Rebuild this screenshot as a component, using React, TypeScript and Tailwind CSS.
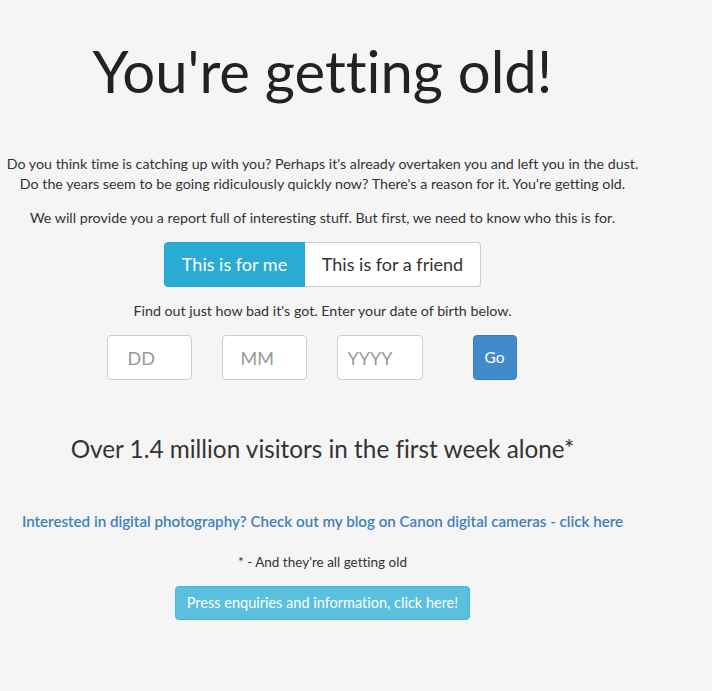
import React from "react";

export default function App() {
  return (
    <div className="min-h-[691px] bg-[#f5f5f5] text-[#333] font-['Lato',sans-serif] [font-variant-ligatures:none]">
      <div className="w-[645px] flex flex-col items-center text-center">
        <h1 className="mt-[33px] text-[58px] leading-[76px] text-[#222] font-normal whitespace-nowrap">You're getting old!</h1>
        <p className="mt-[45px] text-[14.25px] leading-[20px] whitespace-nowrap">
          Do you think time is catching up with you? Perhaps it's already overtaken you and left you in the dust.
          <br />
          Do the years seem to be going ridiculously quickly now? There's a reason for it. You're getting old.
        </p>
        <p className="mt-[14px] text-[14.25px] leading-[20px] whitespace-nowrap">
          We will provide you a report full of interesting stuff. But first, we need to know who this is for.
        </p>
        <div className="mt-[14px] flex h-[45px]">
          <button className="w-[141px] rounded-l-[4px] bg-[#2aabd2] text-white text-[18px] border border-[#28a4c9]">This is for me</button>
          <button className="w-[176px] rounded-r-[4px] bg-white text-[#333] text-[18px] border border-l-0 border-[#ccc]">This is for a friend</button>
        </div>
        <p className="mt-[14px] text-[14.25px] leading-[20px] whitespace-nowrap">Find out just how bad it's got. Enter your date of birth below.</p>
        <div className="mt-[14px] flex items-center ml-[-22px]">
          <input className="w-[85px] h-[45px] rounded-[4px] border border-[#ccc] bg-white px-[20px] text-[18px] placeholder-[#999] outline-none" placeholder="DD" />
          <input className="ml-[30px] w-[85px] h-[45px] rounded-[4px] border border-[#ccc] bg-white px-[18px] text-[18px] placeholder-[#999] outline-none" placeholder="MM" />
          <input className="ml-[30px] w-[86px] h-[45px] rounded-[4px] border border-[#ccc] bg-white px-[10px] text-[18px] placeholder-[#999] outline-none" placeholder="YYYY" />
          <button className="ml-[50px] w-[44px] h-[45px] rounded-[4px] bg-[#428bca] border border-[#357ebd] text-white text-[15.5px]">Go</button>
        </div>
        <h2 className="mt-[53px] text-[24.3px] leading-[32px] text-[#333] whitespace-nowrap">Over 1.4 million visitors in the first week alone*</h2>
        <a href="#" className="mt-[46px] text-[15.15px] leading-[20px] font-semibold text-[#3f81bd] whitespace-nowrap">
          Interested in digital photography? Check out my blog on Canon digital cameras - click here
        </a>
        <p className="mt-[21px] text-[13.5px] leading-[20px]">* - And they're all getting old</p>
        <button className="mt-[14px] w-[295px] h-[34px] rounded-[4px] bg-[#5bc0de] border border-[#46b8da] text-white text-[14.5px]">
          Press enquiries and information, click here!
        </button>
      </div>
    </div>
  );
}
